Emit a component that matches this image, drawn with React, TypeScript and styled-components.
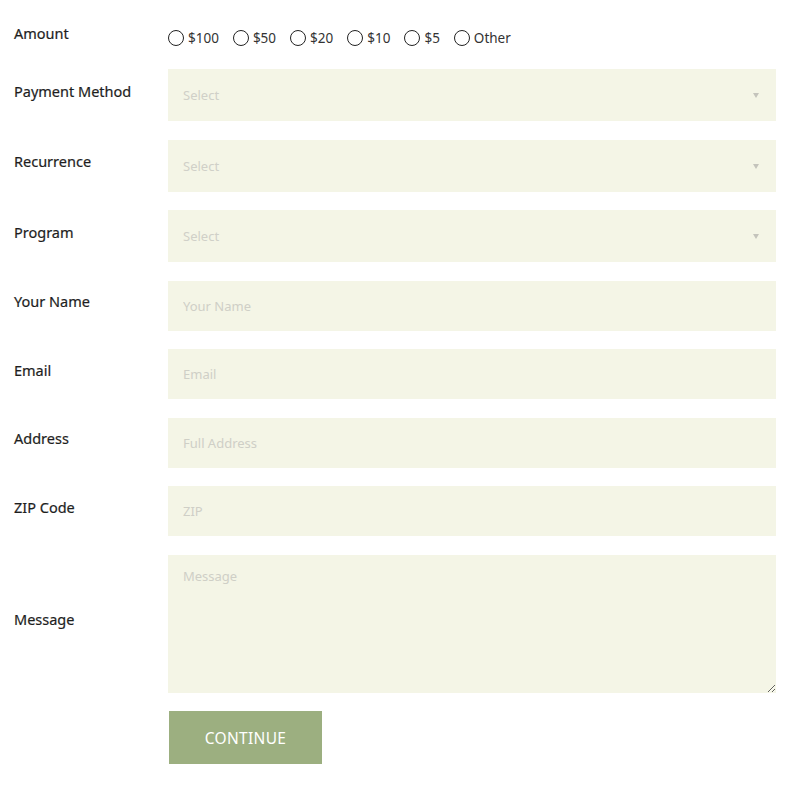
import React from "react";
import styled, { createGlobalStyle } from "styled-components";

const Global = createGlobalStyle`
  html, body { margin: 0; padding: 0; background: #fff; }
  body { font-family: "Noto Sans", "Lato", sans-serif; color: #2b2b2b; }
  * { box-sizing: border-box; }
`;

const Form = styled.form`
  padding: 20.5px 24px 40px 14px;
  display: flex;
  flex-direction: column;
  gap: 18.5px;
`;

const Row = styled.div`
  display: grid;
  grid-template-columns: 154px 1fr;
  align-items: center;
`;

const Label = styled.label<{ $shift?: number }>`
  font-size: 14.5px;
  font-weight: 400;
  color: #1e1e1e;
  margin-bottom: ${(p) => p.$shift ?? 9}px;
  -webkit-text-stroke: 0.2px #1e1e1e;
`;

const Radios = styled.div`
  display: flex;
  align-items: center;
  gap: 14px;
  height: 30px;
  padding-top: 4px;
`;

const RadioItem = styled.label`
  display: flex;
  align-items: center;
  gap: 4px;
  font-size: 13.5px;
  color: #333;
`;

const Radio = styled.input`
  appearance: none;
  margin: 0;
  width: 16px;
  height: 16px;
  border: 1.5px solid #222;
  border-radius: 50%;
  background: #fff;
`;

const SelectWrap = styled.div`
  position: relative;
  height: 52px;
  &::after {
    content: "";
    position: absolute;
    right: 17px;
    top: 24px;
    border-left: 3.5px solid transparent;
    border-right: 3.5px solid transparent;
    border-top: 5px solid #c4c4bc;
  }
`;

const Select = styled.select`
  appearance: none;
  width: 100%;
  height: 100%;
  border: none;
  outline: none;
  background: #f4f5e6;
  padding: 0 15px;
  font-family: inherit;
  font-size: 13px;
  color: #d0d0c8;
`;

const Input = styled.input`
  width: 100%;
  height: 50px;
  border: none;
  outline: none;
  background: #f4f5e6;
  padding: 0 15px;
  font-family: inherit;
  font-size: 13px;
  color: #333;
  &::placeholder { color: #cfcfc6; }
`;

const TextArea = styled.textarea`
  width: 100%;
  height: 138px;
  border: none;
  outline: none;
  background: #f4f5e6;
  padding: 12px 15px;
  font-family: inherit;
  font-size: 13px;
  color: #333;
  display: block;
  resize: vertical;
  &::placeholder { color: #cfcfc6; }
`;

const Button = styled.button`
  grid-column: 2;
  width: 153px;
  height: 53px;
  margin-left: 1px;
  border: none;
  background: #9caf80;
  color: #fff;
  font-family: inherit;
  font-size: 15.5px;
  letter-spacing: 0.3px;
  text-transform: uppercase;
  cursor: pointer;
`;

const amounts = ["$100", "$50", "$20", "$10", "$5", "Other"];

export default function App() {
  return (
    <>
      <Global />
      <Form onSubmit={(e) => e.preventDefault()}>
        <Row>
          <Label $shift={5}>Amount</Label>
          <Radios>
            {amounts.map((a) => (
              <RadioItem key={a}>
                <Radio type="radio" name="amount" />
                {a}
              </RadioItem>
            ))}
          </Radios>
        </Row>
        {["Payment Method", "Recurrence", "Program"].map((l) => (
          <Row key={l}>
            <Label>{l}</Label>
            <SelectWrap>
              <Select defaultValue="">
                <option value="">Select</option>
              </Select>
            </SelectWrap>
          </Row>
        ))}
        {[
          ["Your Name", "Your Name"],
          ["Email", "Email"],
          ["Address", "Full Address"],
          ["ZIP Code", "ZIP"],
        ].map(([l, p]) => (
          <Row key={l}>
            <Label>{l}</Label>
            <Input placeholder={p} />
          </Row>
        ))}
        <Row>
          <Label>Message</Label>
          <TextArea placeholder="Message" />
        </Row>
        <Row>
          <Button type="submit">Continue</Button>
        </Row>
      </Form>
    </>
  );
}
